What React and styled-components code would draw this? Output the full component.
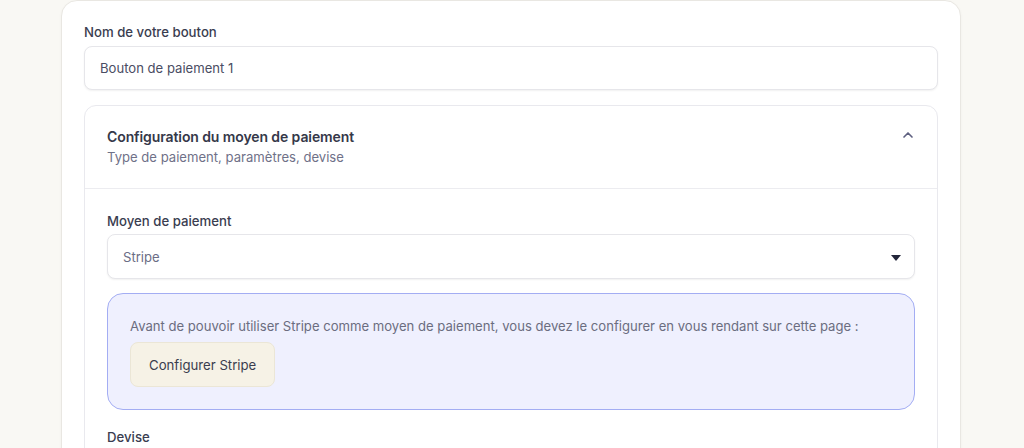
import React from 'react'
import styled, { createGlobalStyle } from 'styled-components'
import { ChevronUp } from 'lucide-react'

const GlobalStyle = createGlobalStyle`
  html, body {
    margin: 0;
    padding: 0;
    background: #f9f8f4;
    font-family: Inter, "Noto Sans", sans-serif;
    -webkit-font-smoothing: antialiased;
  }
`

const Page = styled.div`
  height: 448px;
  overflow: hidden;
  padding-left: 61px;
`

const Card = styled.div`
  width: 900px;
  box-sizing: border-box;
  background: #ffffff;
  border: 1px solid #e9e7e2;
  border-radius: 16px;
  box-shadow: 0 1px 3px rgba(0, 0, 0, 0.04);
  padding: 21px 22px 40px;
`

const Field = styled.div`
  display: flex;
  flex-direction: column;
  margin-bottom: ${(p) => p.$mb || 0}px;
`

const Label = styled.label`
  font-size: 13.2px;
  line-height: 20px;
  font-weight: 500;
  color: #3a3d50;
  margin-bottom: ${(p) => (p.$tight ? 3 : 4)}px;
`

const Input = styled.div`
  height: 44px;
  box-sizing: border-box;
  display: flex;
  align-items: center;
  padding: 0 15px;
  border: 1px solid #e6e6ea;
  border-radius: 8px;
  box-shadow: 0 1px 2px rgba(0, 0, 0, 0.06);
  font-size: 13.1px;
  color: ${(p) => (p.$muted ? '#6b6d85' : '#4a4d63')};
  background: #fff;
`

const Select = styled(Input)`
  height: 45px;
  justify-content: space-between;
  padding-right: 13px;
`

const Caret = styled.span`
  width: 0;
  height: 0;
  border-left: 5px solid transparent;
  border-right: 5px solid transparent;
  border-top: 6px solid #23263a;
  margin-top: 2px;
`

const Accordion = styled.div`
  border: 1px solid #e9e9ee;
  border-radius: 12px;
  overflow: hidden;
`

const AccordionHeader = styled.div`
  display: flex;
  justify-content: space-between;
  align-items: flex-start;
  padding: 21px 21px 21px 22px;
  border-bottom: 1px solid #ececf0;
`

const Title = styled.div`
  font-size: 14px;
  line-height: 20px;
  font-weight: 600;
  letter-spacing: -0.1px;
  color: #353849;
`

const Subtitle = styled.div`
  font-size: 13.1px;
  line-height: 20px;
  color: #6f7188;
`

const Toggle = styled.span`
  display: flex;
  color: #5e6080;
`

const AccordionBody = styled.div`
  padding: 22px 22px 0;
`

const Notice = styled.div`
  margin: 14px 0 17px;
  padding: 22px 22px 22px;
  background: #eff0fe;
  border: 1px solid #a3adf3;
  border-radius: 16px;
`

const NoticeText = styled.p`
  margin: 0 0 6px;
  font-size: 13.1px;
  line-height: 20px;
  color: #6b6d80;
`

const Button = styled.button`
  height: 45px;
  padding: 0 18px;
  border: 1px solid #ebe6d6;
  border-radius: 8px;
  background: #f6f2e6;
  font-family: inherit;
  font-size: 13.2px;
  color: #3a3d4e;
  cursor: pointer;
`

export default function App() {
  return (
    <Page>
      <GlobalStyle />
      <Card>
        <Field $mb={15}>
          <Label>Nom de votre bouton</Label>
          <Input>Bouton de paiement 1</Input>
        </Field>
        <Accordion>
          <AccordionHeader>
            <div>
              <Title>Configuration du moyen de paiement</Title>
              <Subtitle>Type de paiement, paramètres, devise</Subtitle>
            </div>
            <Toggle>
              <ChevronUp size={16} strokeWidth={2.5} />
            </Toggle>
          </AccordionHeader>
          <AccordionBody>
            <Field>
              <Label $tight>Moyen de paiement</Label>
              <Select $muted>
                Stripe
                <Caret />
              </Select>
            </Field>
            <Notice>
              <NoticeText>
                Avant de pouvoir utiliser Stripe comme moyen de paiement, vous devez le configurer en vous rendant sur cette page :
              </NoticeText>
              <Button>Configurer Stripe</Button>
            </Notice>
            <Field>
              <Label>Devise</Label>
              <Select $muted>
                Euro (€)
                <Caret />
              </Select>
            </Field>
          </AccordionBody>
        </Accordion>
      </Card>
    </Page>
  )
}
